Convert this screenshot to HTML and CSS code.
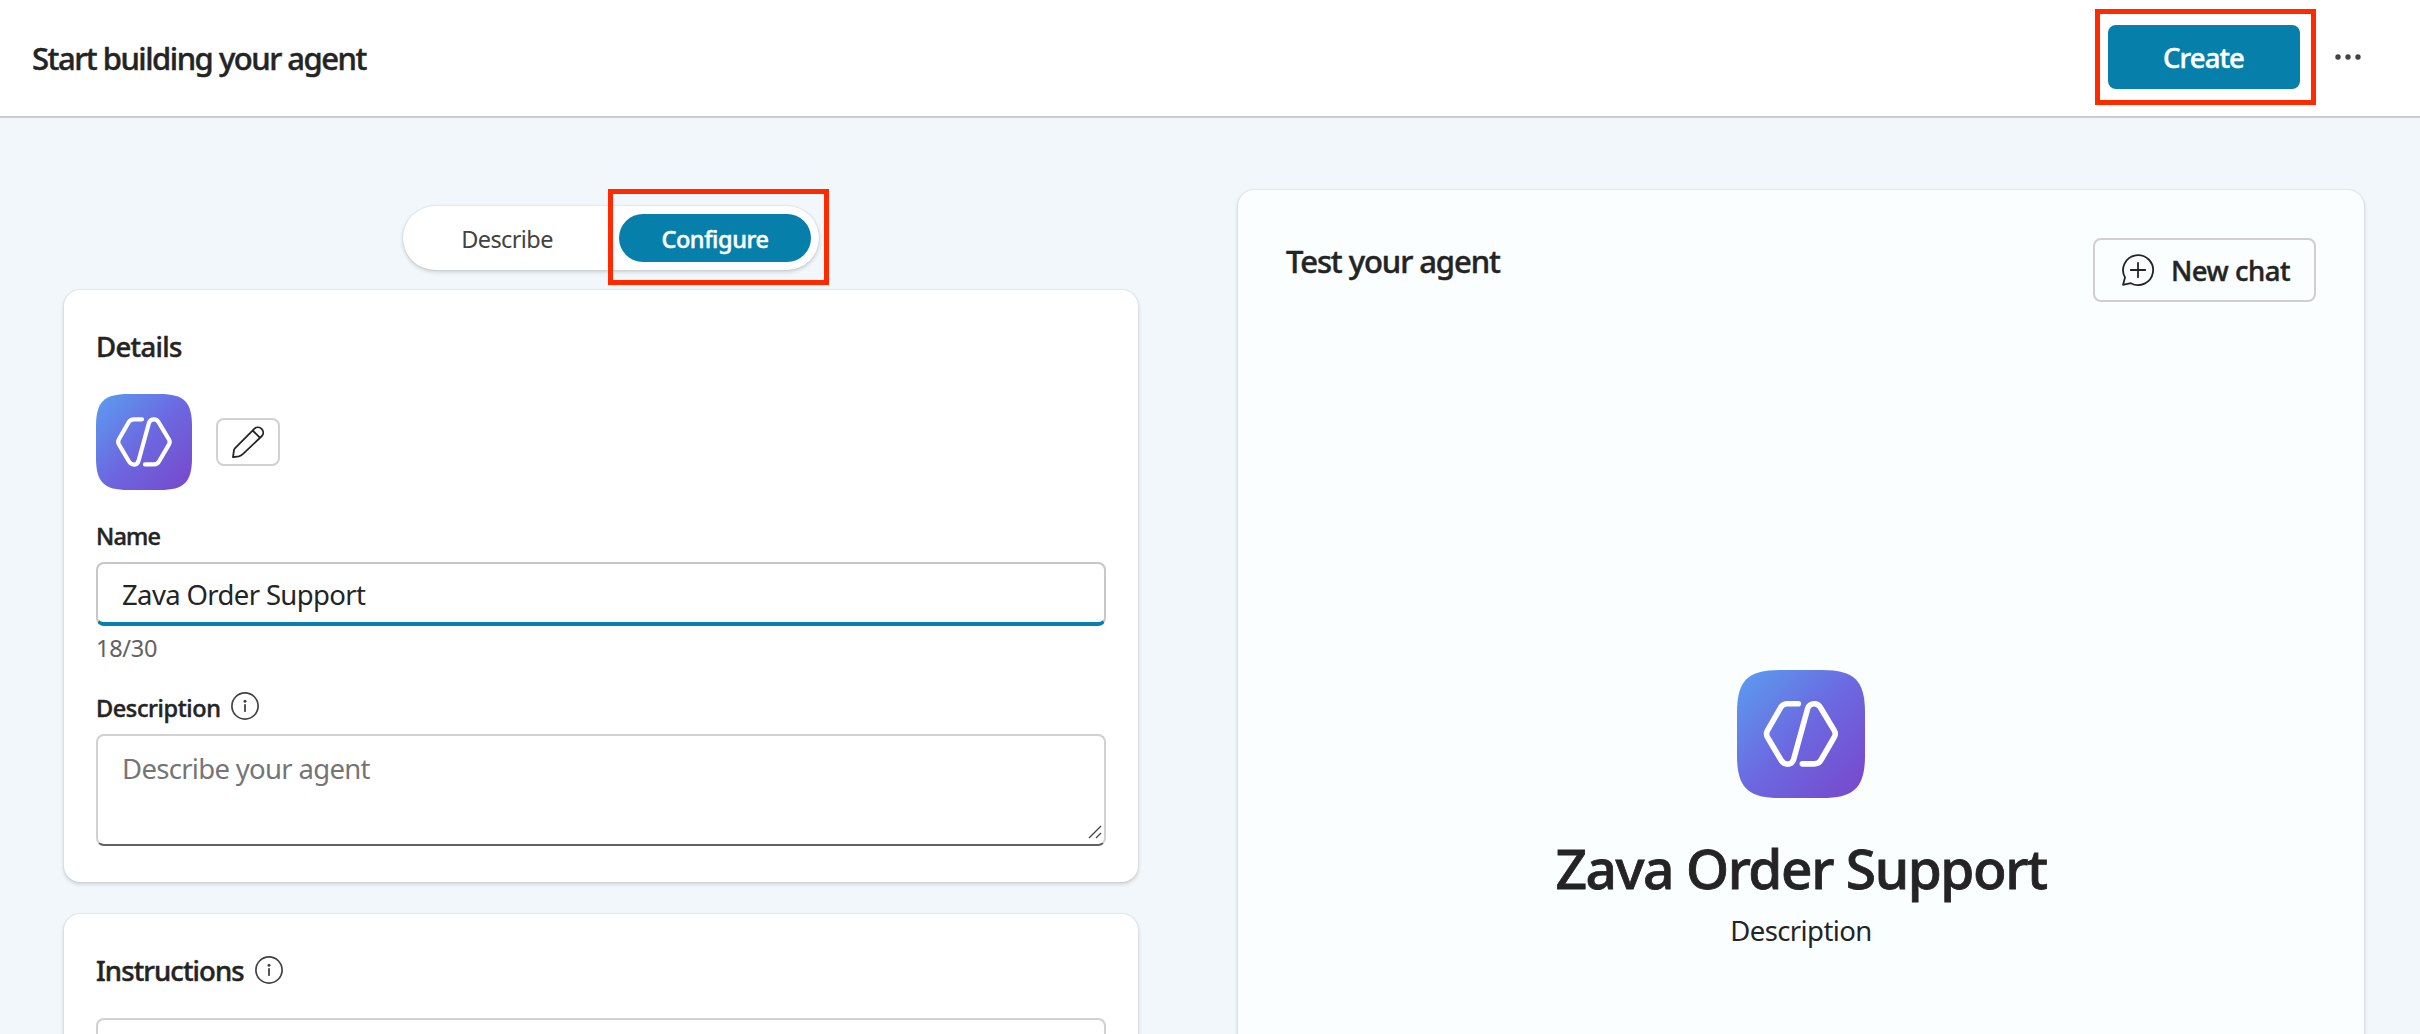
FILE: index.html
```html
<!DOCTYPE html>
<html lang="en">
<head>
<meta charset="utf-8">
<title>Start building your agent</title>
<link rel="stylesheet" href="styles.css">
</head>
<body>
<svg width="0" height="0" class="defs" aria-hidden="true">
  <defs>
    <linearGradient id="tile" x1="0" y1="0" x2="1" y2="1">
      <stop offset="0.05" stop-color="#5c99ee"/>
      <stop offset="0.5" stop-color="#6c68e0"/>
      <stop offset="0.95" stop-color="#774acd"/>
    </linearGradient>
    <symbol id="agent" viewBox="0 0 96 96">
      <path fill="url(#tile)" d="M0 32C0 8 8 0 32 0H64C88 0 96 8 96 32V64C96 88 88 96 64 96H32C8 96 0 88 0 64Z"/>
      <path fill="none" stroke="#fff" stroke-width="4.2" stroke-linecap="round" stroke-linejoin="round" d="M46 25.3H38Q34.5 25.3 32.8 28L22.8 45.5Q21.5 48 22.8 50.3L33 67.5Q34.8 70.6 38 70.6Q41.3 70.6 42.5 67L53 28.8Q54.2 25.3 58 25.3Q61 25.3 62.7 28.3L73 45.5Q74.4 48 73 50.3L63 67.5Q61.4 70.4 58 70.4H49"/>
    </symbol>
    <symbol id="info" viewBox="0 0 28 28">
      <circle cx="14" cy="14" r="13.1" fill="none" stroke="#424242" stroke-width="1.7"/>
      <circle cx="14" cy="9.2" r="1.5" fill="#424242"/>
      <path d="M14 12.8V19.2" stroke="#424242" stroke-width="1.8" stroke-linecap="round"/>
    </symbol>
  </defs>
</svg>
<header class="topbar">
  <h1 class="page-title">Start building your agent</h1>
  <div class="actions">
    <div class="marked">
      <button class="btn-create">Create</button>
      <span class="mark mark-create"></span>
    </div>
    <svg class="more" viewBox="0 0 28 8"><g fill="#424242"><circle cx="4" cy="4" r="2.7"/><circle cx="14" cy="4" r="2.7"/><circle cx="24" cy="4" r="2.7"/></g></svg>
  </div>
</header>
<main class="page">
  <section class="editor">
    <div class="tabs">
      <button class="tab">Describe</button>
      <div class="marked">
        <button class="tab tab-on">Configure</button>
        <span class="mark mark-tab"></span>
      </div>
    </div>
    <div class="card details">
      <h2 class="card-title">Details</h2>
      <div class="icon-row">
        <svg class="agent-icon"><use href="#agent"/></svg>
        <button class="btn-edit"><svg viewBox="0 0 32 32" fill="none" stroke="#242424" stroke-width="1.8" stroke-linejoin="round"><path d="M2.9 22.4L22.5 2.6A5.25 5.25 0 0 1 29.9 10L10.8 28.2Q9 29.8 6.8 30.3L1 31.2L1.9 24.6Q2.1 23.2 2.9 22.4ZM20.6 4.5L28.1 11.8"/></svg></button>
      </div>
      <div class="label name-label">Name</div>
      <div class="input">Zava Order Support</div>
      <div class="counter">18/30</div>
      <div class="label desc-label"><span>Description</span><svg class="info"><use href="#info"/></svg></div>
      <div class="textarea"><span>Describe your agent</span>
        <svg class="grip" viewBox="0 0 16 16"><path d="M2 14L14 2M9 14L14 9" stroke="#424242" stroke-width="1.3"/></svg>
      </div>
    </div>
    <div class="card instructions">
      <h2 class="card-title with-info"><span>Instructions</span><svg class="info"><use href="#info"/></svg></h2>
      <div class="textarea tall"></div>
    </div>
  </section>
  <section class="preview">
    <div class="preview-head">
      <h2 class="preview-title">Test your agent</h2>
      <button class="btn-chat"><svg viewBox="0 0 34 34" fill="none" stroke="#242424" stroke-width="1.8" stroke-linejoin="round" stroke-linecap="round"><path d="M4 24.4A15 15 0 1 1 9.8 30.2L2 31.9L4 24.4ZM9.8 17H24.2M17 9.8V24.2"/></svg><span>New chat</span></button>
    </div>
    <div class="hero">
      <svg class="hero-icon"><use href="#agent"/></svg>
      <div class="hero-name">Zava Order Support</div>
      <div class="hero-desc">Description</div>
    </div>
  </section>
</main>
</body>
</html>
```
FILE: styles.css
```css
* { box-sizing: border-box; }
html { overflow: hidden; }
body {
  margin: 0;
  height: 1034px;
  overflow: hidden;
  display: flex;
  flex-direction: column;
  background: #f2f7fb;
  color: #242424;
  font-family: "Noto Sans", "Open Sans", sans-serif;
}
h1, h2 { margin: 0; font-weight: 500; }
h1, h2, .btn-create, .tab-on, .label, .btn-chat { -webkit-text-stroke: 0.45px currentColor; }
button { font: inherit; margin: 0; padding: 0; border: 0; background: none; color: inherit; }
svg { display: block; flex: none; }
span { white-space: nowrap; }
.defs { position: absolute; }

.topbar {
  flex: none;
  height: 118px;
  padding: 0 58px 2px 32px;
  display: flex;
  align-items: center;
  justify-content: space-between;
  background: #fff;
  border-bottom: 2px solid #ccc;
}
.page-title { padding-top: 2px; font-size: 31px; line-height: 44px; letter-spacing: -1.5px; white-space: nowrap; }
.actions { display: flex; align-items: center; gap: 34px; }
.marked { position: relative; }
.mark { position: absolute; border: 5px solid #ff2a00; width: 221px; height: 96px; }
.mark-create { left: -13px; top: -16px; }
.mark-tab { left: -11px; top: -25px; }
.btn-create {
  display: block;
  width: 192px;
  height: 64px;
  padding: 1px 1px 0 0;
  border-radius: 8px;
  background: #077fab;
  color: #fff;
  font-size: 27.5px;
  font-weight: 500;
  letter-spacing: -0.92px;
}
.more { width: 28px; height: 8px; }

.page { flex: 1; min-height: 0; display: flex; padding: 72px 56px 0 64px; gap: 100px; overflow: hidden; }
.editor { width: 1074px; display: flex; flex-direction: column; align-items: center; }
.tabs {
  flex: none;
  display: flex;
  justify-content: space-between;
  width: 416px;
  height: 64px;
  margin-top: 16px;
  padding: 8px;
  border-radius: 32px;
  margin-left: 20px;
  background: #fff;
  box-shadow: 0 0 2px rgba(0,0,0,.14), 0 2px 4px rgba(0,0,0,.16);
}
.tab {
  width: 192px;
  height: 48px;
  padding-top: 1px;
  border-radius: 24px;
  font-size: 23.5px;
  letter-spacing: -0.6px;
  color: #424242;
}
.tab-on { background: #077fab; color: #fff; font-weight: 500; letter-spacing: -0.44px; }
.card {
  width: 100%;
  flex: none;
  padding: 0 32px;
  border-radius: 16px;
  background: #fff;
  box-shadow: 0 0 2px rgba(0,0,0,.14), 0 2px 4px rgba(0,0,0,.16);
}
.details { height: 592px; margin-top: 20px; padding-top: 37px; }
.instructions { height: 400px; margin-top: 32px; padding-top: 37px; }
.card-title { font-size: 27.5px; line-height: 40px; letter-spacing: -0.67px; }
.icon-row { display: flex; align-items: center; gap: 24px; margin-top: 27px; height: 96px; }
.agent-icon { width: 96px; height: 96px; }
.btn-edit {
  width: 64px;
  height: 48px;
  border: 2px solid #d1d1d1;
  border-radius: 8px;
  display: flex;
  align-items: center;
  justify-content: center;
}
.btn-edit svg { width: 32px; height: 32px; }
.label { display: flex; font-size: 23.5px; font-weight: 500; line-height: 32px; letter-spacing: -0.4px; }
.name-label { margin-top: 30px; letter-spacing: -0.8px; }
.input {
  height: 64px;
  margin-top: 10px;
  padding: 1px 0 0 24px;
  border: 2px solid #c7c7c7;
  border-bottom: 4px solid #077fab;
  border-radius: 8px;
  font-size: 27.5px;
  line-height: 60px;
  letter-spacing: -0.64px;
}
.counter { font-size: 23.5px; line-height: 32px; margin-top: 6px; color: #616161; letter-spacing: -0.27px; }
.desc-label { margin-top: 28px; }
.info { width: 28px; height: 28px; margin: 0 0 0 10px; }
.textarea {
  position: relative;
  height: 112px;
  margin-top: 10px;
  padding: 13px 24px;
  border: 2px solid #d1d1d1;
  border-bottom-color: #616161;
  border-radius: 8px;
  color: #757575;
  font-size: 27.5px;
  line-height: 40px;
  letter-spacing: -0.69px;
}
.grip { position: absolute; right: 1px; bottom: 4px; width: 16px; height: 16px; }
.with-info { display: flex; letter-spacing: -0.9px; }
.with-info .info { margin: 5px 0 0 11px; }
.tall { height: 240px; margin-top: 27px; }

.preview {
  width: 1126px;
  height: 900px;
  flex: none;
  border-radius: 16px;
  background: #fafeff;
  box-shadow: 0 0 2px rgba(0,0,0,.14), 0 2px 4px rgba(0,0,0,.16);
}
.preview-head { display: flex; justify-content: space-between; padding: 48px 48px 0 48px; }
.preview-title { font-size: 31px; line-height: 46px; letter-spacing: -1.08px; }
.btn-chat {
  width: 223px;
  height: 64px;
  padding-left: 26px;
  display: flex;
  align-items: center;
  border: 2px solid #d1cfcd;
  border-radius: 8px;
  font-size: 27.5px;
  font-weight: 500;
  letter-spacing: -0.48px;
  gap: 16px;
}
.btn-chat span { padding-top: 1px; }
.btn-chat svg { width: 34px; height: 34px; }
.hero { display: flex; flex-direction: column; align-items: center; margin-top: 368px; }
.hero-icon { width: 128px; height: 128px; }
.hero-name {
  margin-top: 34px;
  font-size: 55px;
  line-height: 72px;
  font-weight: 500;
  letter-spacing: -1.44px;
  -webkit-text-stroke: 0.8px currentColor;
}
.hero-desc { margin-top: 7px; font-size: 27.5px; line-height: 40px; letter-spacing: -0.6px; }
```
